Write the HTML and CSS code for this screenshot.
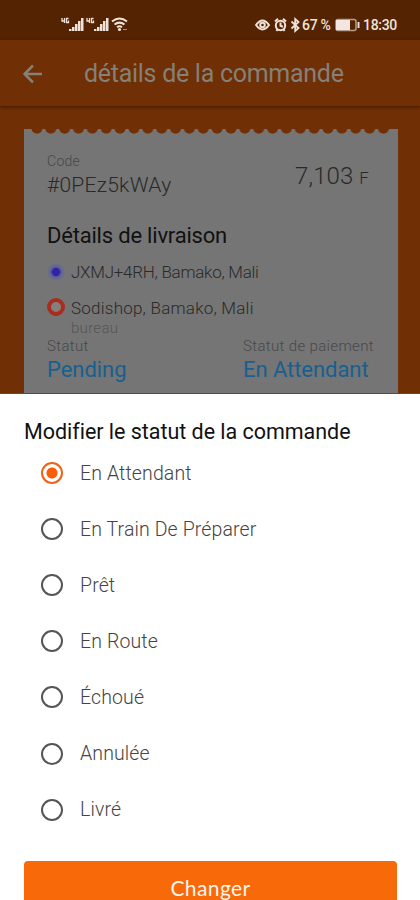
FILE: index.html
```html
<!DOCTYPE html>
<html lang="fr">
<head>
<meta charset="utf-8">
<meta name="viewport" content="width=device-width, initial-scale=1">
<title>Détails de la commande</title>
<link rel="stylesheet" href="styles.css">
</head>
<body>
<div class="screen">
  <div class="statusbar">
    <svg class="signals" width="68" height="18" viewBox="0 0 68 18">
      <g fill="#f0e2d8">
        <path d="M8 15v-2h2.500v2zM11 15v-4h2.500v4zM14 15V8h2.500v7zM17 15V5h2.500v10zM20 15V2h2.500v13z"/>
        <path d="M33 15v-2h2.500v2zM36 15v-4h2.500v4zM39 15V8h2.500v7zM42 15V5h2.500v10zM45 15V2h2.500v13z"/>
      </g>
      <g fill="none" stroke="#f0e2d8" stroke-width="1.300">
        <path d="M3.500 2v3H1V2M3.500 2v5M7.500 2.500H5.500V6.500h2V4.500M28.500 2v3H26V2M28.500 2v5M32.500 2.500H30.500V6.500h2V4.500"/>
        <path stroke-width="2" d="M51 5.500q7.500-6 15 0M53.500 8.500q5-3.800 10 0M56 11.200q2.500-1.800 5 0"/>
      </g>
      <circle cx="58.500" cy="13.500" r="1.600" fill="#f0e2d8"/>
      <path d="M62 13.500h4" stroke="#a88b78"/>
    </svg>
    <svg class="sysicons" width="46" height="18" viewBox="0 0 46 18">
      <g fill="none" stroke="#f0e2d8" stroke-width="2">
        <path d="M1 9q6.500-9 13 0q-6.500 9-13 0z"/>
        <circle cx="7.500" cy="9" r="2.300"/>
        <circle cx="25.500" cy="9.500" r="4.700"/>
        <path d="M20 5.500l3-2.700M31 5.500l-3-2.700M25.500 6.500v3.300l2.500 1M22.500 13l-1 2M28.500 13l1 2"/>
        <path stroke-width="1.800" d="M36.500 5.500l7 6.500-3.300 3V3l3.300 3-7 6.500"/>
      </g>
    </svg>
    <span class="percent">67 %</span>
    <svg class="battery" width="25" height="14" viewBox="0 0 25 14">
      <rect x="1" y="1.500" width="20" height="11" rx="2" fill="none" stroke="#b79e8d" stroke-width="1.500"/>
      <rect x="1" y="2" width="14" height="10" fill="#f1e7e0"/>
      <path d="M23.500 4v6" stroke="#e8d8cd" stroke-width="2"/>
    </svg>
    <span class="clock">18:30</span>
  </div>
  <header class="appbar">
    <svg width="20" height="20" viewBox="0 0 20 20" fill="none" stroke="#858078" stroke-width="2.500"><path d="M19 11H2M10 2.500L1.500 11L10 19.500"/></svg>
    <h1>détails de la commande</h1>
  </header>
  <main class="order">
    <section class="ticket">
      <div class="perforation"></div>
      <div class="summary">
        <div>
          <div class="label code-label">Code</div>
          <div class="code">#0PEz5kWAy</div>
        </div>
        <div class="price">7,103 <small>F</small></div>
      </div>
      <h2>Détails de livraison</h2>
      <div class="place from"><i class="dot"></i><span>JXMJ+4RH, Bamako, Mali</span></div>
      <div class="place to"><i class="ring"></i><span>Sodishop, Bamako, Mali</span></div>
      <div class="note">bureau</div>
      <div class="states">
        <div><div class="label">Statut</div><div class="value">Pending</div></div>
        <div><div class="label">Statut de paiement</div><div class="value">En Attendant</div></div>
      </div>
    </section>
  </main>
  <section class="sheet">
    <h3>Modifier le statut de la commande</h3>
    <ul>
      <li class="selected"><i class="radio"></i><span>En Attendant</span></li>
      <li><i class="radio"></i><span>En Train De Préparer</span></li>
      <li><i class="radio"></i><span>Prêt</span></li>
      <li><i class="radio"></i><span>En Route</span></li>
      <li><i class="radio"></i><span>Échoué</span></li>
      <li><i class="radio"></i><span>Annulée</span></li>
      <li><i class="radio"></i><span>Livré</span></li>
    </ul>
    <button>Changer</button>
  </section>
</div>
</body>
</html>
```
FILE: styles.css
```css
* { box-sizing: border-box; }
body { margin: 0; background: #fff; }
h1, h2, h3, ul { margin: 0; padding: 0; font-weight: 400; list-style: none; }
.screen { width: 420px; height: 900px; overflow: hidden; display: flex; flex-direction: column; font-family: Roboto, "Noto Sans", sans-serif; white-space: nowrap; }
.screen svg { display: block; flex: none; }
.statusbar { height: 40px; flex: none; background: #532302; display: flex; align-items: center; padding: 9px 0 0 61px; color: #f0e2d8; font-size: 14px; font-weight: 500; }
.sysicons { margin-left: 126px; }
.percent { margin-left: 1px; width: 31px; letter-spacing: -.3px; }
.battery { margin-left: 2px; }
.clock { margin-left: 3px; letter-spacing: -.3px; }
.appbar { height: 66px; flex: none; background: #702f04; display: flex; align-items: center; padding-left: 23px; box-shadow: 0 1px 3px #3c1800; z-index: 1; color: #858078; }
.appbar h1 { margin: 2px 0 0 41px; font-size: 25px; line-height: 30px; letter-spacing: -.28px; }
.order { height: 288px; flex: none; background: #702f04; padding: 23px 22px 0 24px; border-bottom: 1px solid #5b4a40; }
.ticket { height: 264px; background: #757575; padding: 0 24px 0 23px; color: #292929; font-weight: 300; }
.perforation { height: 6px; margin: 0 -17px; background: radial-gradient(circle at 6.93px -1px, #702f04 5.2px, transparent 6px) 0 0 / 13.87px 6px repeat-x; }
.summary { display: flex; justify-content: space-between; height: 87px; padding-top: 17px; }
.label { font-size: 15px; line-height: 18px; color: #484848; letter-spacing: .35px; }
.code-label { font-size: 14px; letter-spacing: .3px; }
.code { font-size: 21px; line-height: 30px; letter-spacing: .25px; }
.price { font-size: 24px; line-height: 28px; margin: 10px 5px 0 0; letter-spacing: .1px; }
.price small { font-size: 17px; }
.ticket h2 { font-size: 22px; line-height: 28px; color: #111; letter-spacing: -.2px; }
.place { display: flex; align-items: center; gap: 6px; height: 36px; font-size: 17px; }
.from { margin-top: 4px; letter-spacing: -.27px; }
.to { letter-spacing: .23px; }
.to .ring { margin-top: -3px; }
.dot { width: 18px; height: 18px; border-radius: 50%; background: radial-gradient(circle, #3022a5 3.5px, #605d95 5px, #696891 7px, #757575 9px); }
.ring { width: 18px; height: 18px; border-radius: 50%; border: 4.5px solid #a92d1c; background: #858080; }
.note { margin: -7px 0 0 24px; font-size: 15px; line-height: 18px; color: #555; letter-spacing: .3px; }
.states { display: grid; grid-template-columns: 196px 1fr; }
.value { font-size: 22px; line-height: 29px; color: #18608f; font-weight: 400; letter-spacing: -.05px; }
.sheet { flex: 1; background: #fff; padding: 24px 23px 0 24px; color: #444; }
.sheet h3 { font-size: 21.5px; line-height: 28px; color: #111; letter-spacing: -.03px; }
.sheet ul { margin-top: -1px; }
.sheet li { height: 56.1px; display: flex; align-items: center; gap: 17px; padding-left: 17px; font-size: 19.5px; font-weight: 300; letter-spacing: .12px; }
.radio { width: 22px; height: 22px; border: 2px solid #555; border-radius: 50%; }
.selected .radio { border-color: #f26017; background: radial-gradient(circle, #f95d06 5px, transparent 6px); }
.sheet button { display: block; width: 373px; height: 56px; margin-top: 23px; border: 0; border-radius: 4px; background: #f8690a; color: #fff4ec; font: 400 21px/53px Lato, sans-serif; letter-spacing: .4px; padding: 0 0 3px; }
```
